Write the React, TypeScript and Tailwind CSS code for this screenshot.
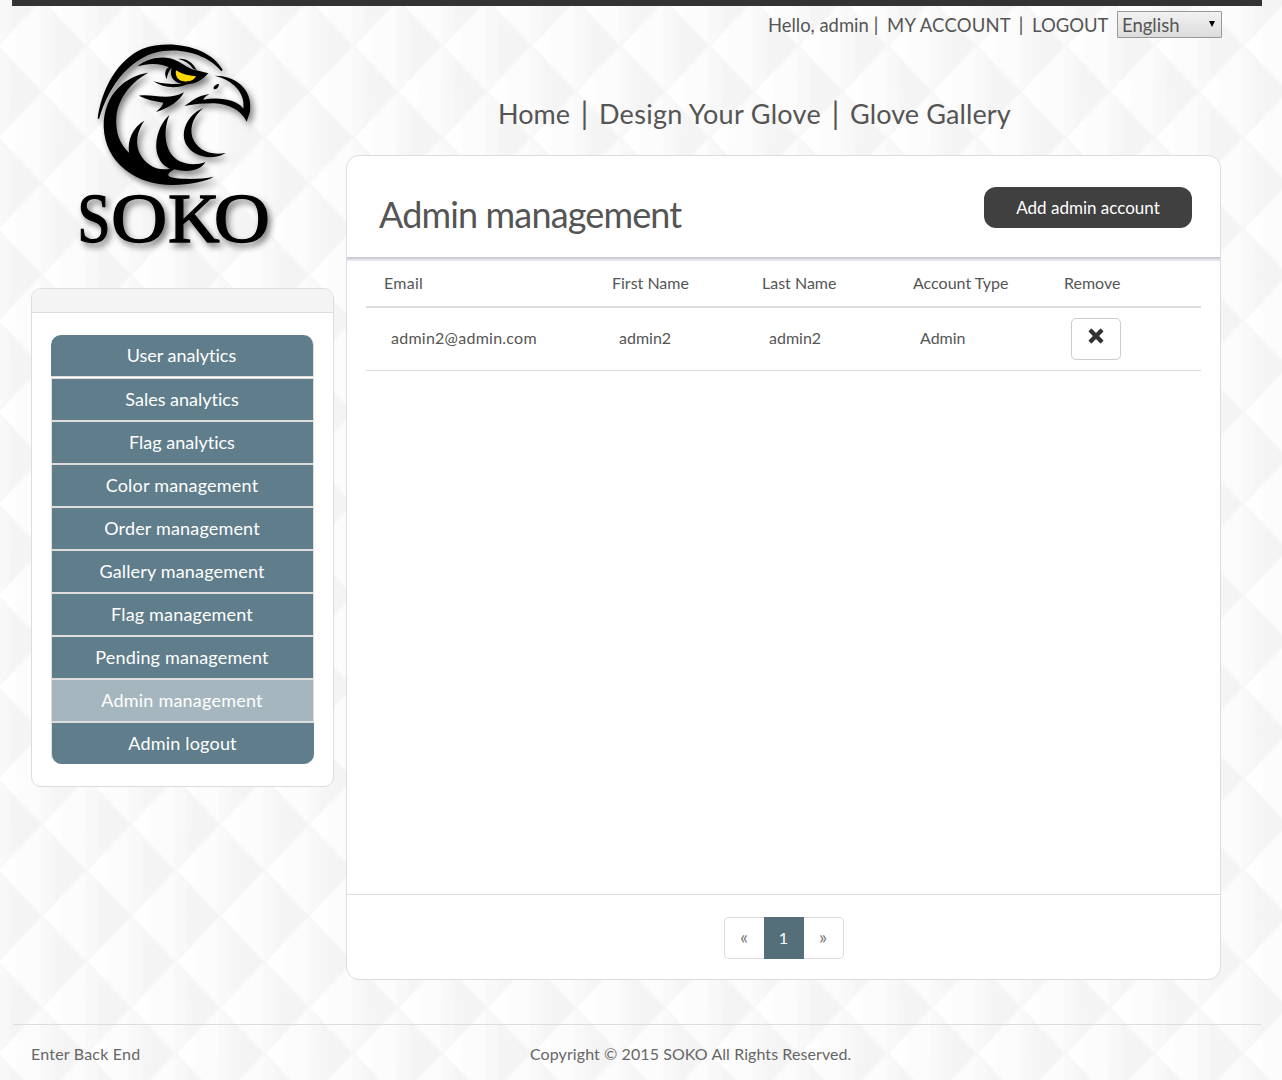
import { clsx } from "clsx";

const menu = [
  { label: "User analytics", tracking: "tracking-normal" },
  { label: "Sales analytics", tracking: "tracking-normal" },
  { label: "Flag analytics", tracking: "tracking-normal" },
  { label: "Color management", tracking: "tracking-[0.2px]" },
  { label: "Order management", tracking: "tracking-[0.17px]" },
  { label: "Gallery management", tracking: "tracking-[0.17px]" },
  { label: "Flag management", tracking: "tracking-[0.17px]" },
  { label: "Pending management", tracking: "tracking-[0.17px]" },
  { label: "Admin management", tracking: "tracking-[0.22px]", active: true },
  { label: "Admin logout", tracking: "tracking-[0.2px]" },
];

function Backdrop() {
  return (
    <svg className="absolute inset-0 -z-10 h-full w-full" aria-hidden="true">
      <defs>
        <linearGradient id="facet" x1="0" x2="1" y1="0" y2="0">
          <stop offset="0" stopColor="#ffffff" />
          <stop offset="0.2" stopColor="#fefefe" />
          <stop offset="0.24" stopColor="#fcfcfc" />
          <stop offset="0.47" stopColor="#fcfcfc" />
          <stop offset="0.5" stopColor="#f9f9f9" />
          <stop offset="0.61" stopColor="#f8f8f8" />
          <stop offset="0.65" stopColor="#f5f5f5" />
          <stop offset="1" stopColor="#f3f3f4" />
        </linearGradient>
        <pattern id="quilt" x="-2.8" y="0" width="89" height="91.6" patternUnits="userSpaceOnUse">
          <rect width="89" height="91.6" fill="#f8f8f8" />
          <g fill="url(#facet)" stroke="#f7f7f7" strokeOpacity="0.7" strokeWidth="2">
            <path d="M0 45.8 44.5 0 89 45.8 44.5 91.6z" />
            <path d="M-44.5 0 0-45.8 44.5 0 0 45.8z" />
            <path d="M44.5 0 89-45.8 133.5 0 89 45.8z" />
            <path d="M-44.5 91.6 0 45.8 44.5 91.6 0 137.4z" />
            <path d="M44.5 91.6 89 45.8 133.5 91.6 89 137.4z" />
          </g>
        </pattern>
      </defs>
      <rect width="100%" height="100%" fill="url(#quilt)" />
    </svg>
  );
}

function Logo() {
  return (
    <svg
      className="ml-[29px] block h-[240px] w-[230px] drop-shadow-[3px_4px_3px_rgba(0,0,0,0.5)]"
      viewBox="0 0 690 720"
      role="img"
      aria-label="SOKO"
    >
      <path d="M113 265C124 180 170 90 248 56C330 26 452 50 488 120L484 124C455 85 385 54 310 63C220 74 147 160 117 268z" />
      <path d="M265 128C200 137 130 190 131 290C135 400 230 466 340 465C390 463 440 454 461 440C430 447 380 449 345 444C330 442 310 438 343 418C390 430 424 418 436 396C400 410 352 402 332 370C315 343 310 300 328 255C292 288 278 350 298 387C305 402 317 410 330 416C290 425 255 402 240 372C226 343 228 308 253 272C218 292 202 330 207 368C180 342 166 310 169 262C173 205 215 155 265 128z" />
      <path d="M430 234C380 255 358 310 380 346C400 380 456 394 497 369C446 378 410 358 397 322C388 288 402 258 430 234z" />
      <path d="M464 137C520 136 580 172 570 245L560 275C544 240 504 222 462 220C430 220 405 222 373 228C395 215 408 198 448 192C435 200 432 204 430 209C480 200 532 210 550 236C557 188 518 150 464 137z" />
      <path d="M477 162C468 162 457 170 462 178C471 178 476 172 477 162z" />
      <path d="M232 109C265 82 315 74 350 92C368 100 386 116 406 120L445 130C425 152 398 168 366 162C338 156 328 138 335 115C302 98 265 99 232 109z" />
      <path d="M355 87C378 84 397 97 410 120L400 117C390 102 375 92 355 87z" />
      <path d="M337 108C316 111 311 130 320 147C323 130 328 120 337 110z" />
      <path d="M280 154C310 174 350 178 382 162C350 162 315 164 280 154z" />
      <path d="M236 197C280 190 320 214 372 187C358 215 325 235 288 246C300 235 308 227 310 218C282 214 260 208 236 197z" />
      <path d="M348 121C366 132 385 137 408 139C400 156 374 158 359 150C349 144 346 133 348 121z" fill="#ffd800" />
      <g className="font-['Liberation_Serif',serif] text-[212px]" fill="#000" stroke="#000" strokeWidth="4">
        <text x="52" y="636" textLength="100" lengthAdjust="spacingAndGlyphs">S</text>
        <text x="153" y="636" textLength="169" lengthAdjust="spacingAndGlyphs">O</text>
        <text x="324" y="636" textLength="155" lengthAdjust="spacingAndGlyphs">K</text>
        <text x="461" y="636" textLength="169" lengthAdjust="spacingAndGlyphs">O</text>
      </g>
    </svg>
  );
}

function RemoveIcon() {
  return (
    <svg className="mr-px mb-[6px] h-4 w-4" viewBox="0 0 15 15" aria-hidden="true">
      <path
        d="M3.6.7 7.5 4.6 11.4.7Q11.8.4 12.2.7L14.3 2.8Q14.6 3.2 14.3 3.6L10.4 7.5 14.3 11.4Q14.6 11.8 14.3 12.2L12.2 14.3Q11.8 14.6 11.4 14.3L7.5 10.4 3.6 14.3Q3.2 14.6 2.8 14.3L.7 12.2Q.4 11.8.7 11.4L4.6 7.5.7 3.6Q.4 3.2.7 2.8L2.8.7Q3.2.4 3.6.7z"
        fill="#333"
      />
    </svg>
  );
}

function Sidebar() {
  return (
    <aside className="mt-[18px] ml-[19px] h-[499px] w-[303px] overflow-hidden rounded-[10px] border border-[#ddd] bg-white">
      <div className="h-6 border-b border-[#ddd] bg-[#f4f4f4]" />
      <nav className="mt-[22px] ml-[19px] flex w-[263px] flex-col text-[18px] text-white">
        {menu.map((item, i) => (
          <a
            key={item.label}
            className={clsx(
              "flex items-center justify-center border-[#ddd] pr-px",
              item.tracking,
              item.active ? "bg-[#a6b6be]" : "bg-[#607d8b]",
              i === 0 && "mb-px h-[42px] rounded-t-[10px] border-r border-b",
              i > 0 && i < menu.length - 1 && "h-[43px] border",
              i === menu.length - 1 && "h-[42px] rounded-b-[10px] border-t border-l",
            )}
          >
            {item.label}
          </a>
        ))}
      </nav>
    </aside>
  );
}

function TopLinks() {
  return (
    <div className="mt-[5px] flex h-[27px] w-[876px] items-center justify-end text-[18.5px] whitespace-nowrap">
      <span className="w-[101px] pt-[2px] text-[18.4px]">Hello, admin</span>
      <span className="w-[18px] pr-[4px] pb-px text-center text-[20px] leading-[27px]">|</span>
      <span className="w-[125px] pt-[2px] tracking-[0.2px]">MY ACCOUNT</span>
      <span className="w-[20px] pr-[2px] pb-px text-center text-[20px] leading-[27px]">|</span>
      <span className="w-[85px] pt-[2px]">LOGOUT</span>
      <div className="flex h-[27px] w-[105px] items-center justify-between rounded-[1px] border border-[#999] bg-linear-to-b from-[#f2f2f2] to-[#dcdcdc] pr-[6px] pl-1">
        <span className="pt-[2px]">English</span>
        <svg className="mb-[2px] h-[6px] w-[6px]" viewBox="0 0 6 6" aria-hidden="true">
          <path d="M0 0h6L3 6z" fill="#000" />
        </svg>
      </div>
    </div>
  );
}

const columns = "grid grid-cols-[228px_150px_151px_151px_1fr] items-center";

function Panel() {
  return (
    <main className="mt-[23px] flex h-[825px] w-[875px] flex-col rounded-[13px] border border-[#ddd] bg-white">
      <div className="flex h-[101px] items-start justify-between pr-7 pl-8">
        <h1 className="mt-[31px] text-[36px] leading-[54px] tracking-[-0.85px]">Admin management</h1>
        <button className="mt-[31px] h-[41px] w-[208px] rounded-xl bg-[#404040] text-[17px] text-white">
          Add admin account
        </button>
      </div>
      <div className="h-[4px] bg-linear-to-b from-[#c2c2cd] to-[#f0f0f8]" />
      <div className="mx-[19px] flex-1 text-[16px]">
        <div className={clsx(columns, "h-[47px] border-b-2 border-[#ddd] pb-px pl-[18px]")}>
          <span className="tracking-[0.25px]">Email</span>
          <span>First Name</span>
          <span>Last Name</span>
          <span>Account Type</span>
          <span>Remove</span>
        </div>
        <div className={clsx(columns, "h-[63px] border-b border-[#ddd] pl-[25px]")}>
          <span className="pb-[2px] tracking-[0.25px]">admin2@admin.com</span>
          <span className="pb-[2px]">admin2</span>
          <span className="pb-[2px]">admin2</span>
          <span className="pb-[2px]">Admin</span>
          <button
            className="flex h-[42px] w-[50px] items-center justify-center rounded-[5px] border border-[#ccc] bg-white"
            aria-label="Remove"
          >
            <RemoveIcon />
          </button>
        </div>
      </div>
      <div className="flex h-[85px] justify-center border-t border-[#ddd] pt-[22px] text-[16px]">
        <div className="flex h-[42px]">
          <span className="flex w-10 items-center justify-center rounded-l-[5px] border border-r-0 border-[#ddd] pb-[2px] text-[19px] text-[#777]">«</span>
          <span className="flex w-10 items-center justify-center bg-[#546e7a] text-white">1</span>
          <span className="flex w-10 items-center justify-center rounded-r-[5px] border border-l-0 border-[#ddd] pb-[2px] text-[19px] text-[#777]">»</span>
        </div>
      </div>
    </main>
  );
}

export default function App() {
  return (
    <div className="relative isolate h-[1080px] w-[1282px] overflow-hidden font-['Lato',sans-serif] text-[#555] [font-variant-ligatures:none]">
      <Backdrop />
      <div className="ml-3 w-[1250px]">
        <div className="h-[6px] bg-[#333]" />
        <div className="flex">
          <div className="w-[334px] pt-6">
            <div className="pl-[19px]">
              <Logo />
            </div>
            <Sidebar />
          </div>
          <div className="w-[876px]">
            <TopLinks />
            <nav className="mt-[56px] flex h-[38px] items-center pl-[152px] text-[27px] whitespace-nowrap">
              <span className="pt-[2px]">Home</span>
              <span className="w-[29px] text-center text-[30px] leading-[38px]">|</span>
              <span className="w-[222px] pt-[2px] tracking-[0.3px]">Design Your Glove</span>
              <span className="w-[29px] text-center text-[30px] leading-[38px]">|</span>
              <span className="pt-[2px] tracking-[0.1px]">Glove Gallery</span>
            </nav>
            <Panel />
          </div>
        </div>
        <footer className="mt-[44px] mr-px ml-px flex h-[58px] items-center border-t border-[#ddd] pl-[18px] text-[16px] text-[#666]">
          <span className="w-[499px] tracking-[0.2px]">Enter Back End</span>
          <span className="tracking-[0.08px]">Copyright © 2015 SOKO All Rights Reserved.</span>
        </footer>
      </div>
    </div>
  );
}
